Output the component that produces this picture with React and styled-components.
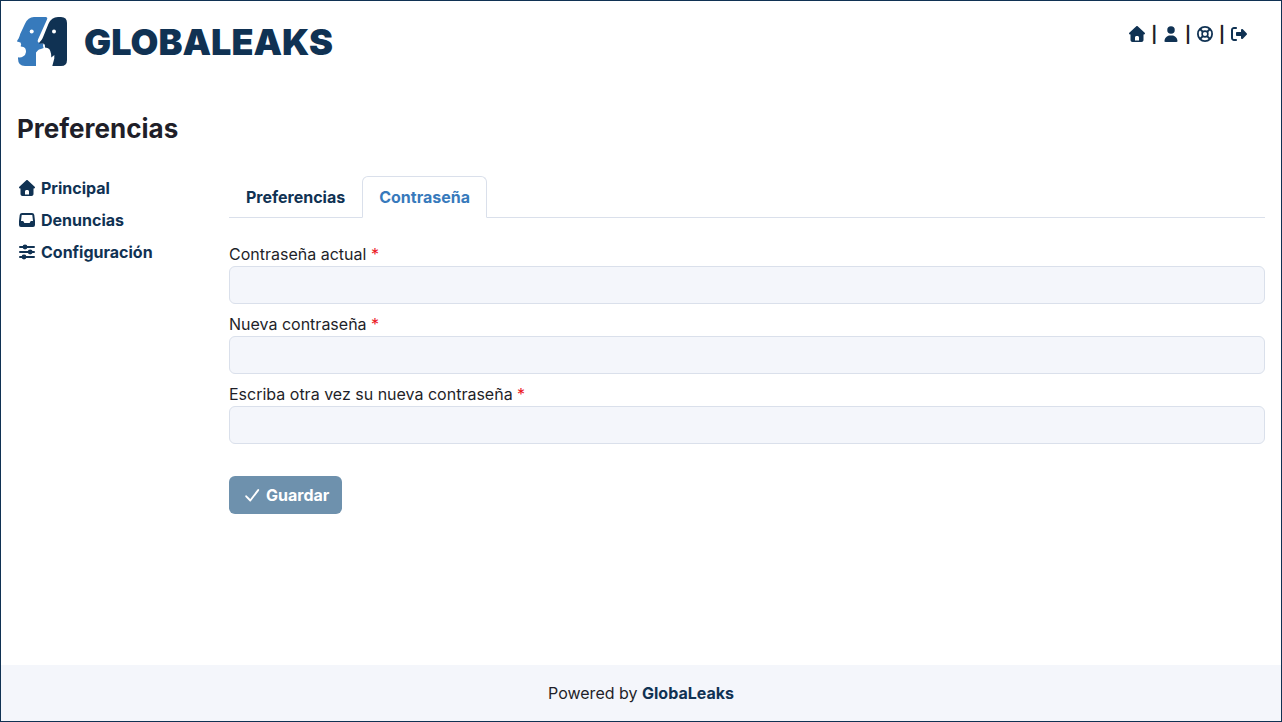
import React, { useState } from "react";
import styled, { createGlobalStyle } from "styled-components";
import { FaRightFromBracket } from "react-icons/fa6";

const GlobalStyle = createGlobalStyle`
  *, *::before, *::after {
    box-sizing: border-box;
  }
  body {
    margin: 0;
    background-color: white;
    color: rgb(31, 31, 41);
    font-family: Inter, "Liberation Sans", sans-serif;
    font-size: 16px;
    line-height: 24px;
  }
  a {
    color: rgb(16, 50, 83);
    font-weight: bold;
    text-decoration: none;
  }
`;

const Page = styled.div`
  min-height: 100vh;
  border: 1px solid rgb(16, 50, 83);
  display: flex;
  flex-direction: column;
`;

const Header = styled.header`
  display: flex;
  justify-content: space-between;
  align-items: flex-start;
  padding: 16px;
`;

const Brand = styled.a`
  display: flex;
  align-items: center;
  gap: 16px;
  height: 50px;
`;

const BrandName = styled.span`
  font-size: 36px;
  font-weight: 900;
  line-height: 50px;
`;

const UserMenu = styled.nav`
  display: flex;
  align-items: center;
  gap: 6px;
  padding: 5px 18px 0 0;
  a {
    display: flex;
  }
`;

const Divider = styled.span`
  font-weight: bold;
`;

const Icon = styled.svg`
  flex: none;
  width: 16px;
  height: 16px;
  fill: currentColor;
`;

const Content = styled.main`
  flex: 1;
  padding: 30px 16px;
`;

const Title = styled.h1`
  margin: 0 0 31px 0;
  font-size: 26px;
  line-height: 32px;
  font-weight: bold;
`;

const Columns = styled.div`
  display: flex;
  margin: 0 -12px;
`;

const Sidebar = styled.nav`
  flex: 0 0 calc(100% / 6);
  padding: 0 12px;
`;

const SideLink = styled.a`
  display: flex;
  align-items: center;
  gap: 6px;
  height: 32px;
  padding-left: 2px;
  margin-top: ${(props) => (props.$first ? "-4px" : "0")};
`;

const Panel = styled.section`
  flex: 1;
  padding: 0 12px;
`;

const Tabs = styled.div`
  display: flex;
  border-bottom: 1px solid rgb(218, 224, 235);
`;

const Tab = styled.button`
  height: 42px;
  margin: 0 0 -1px 0;
  padding: 0 16px;
  border: 1px solid ${(props) => (props.$active ? "rgb(218, 224, 235)" : "transparent")};
  border-bottom-color: ${(props) => (props.$active ? "white" : "transparent")};
  border-radius: 6px 6px 0 0;
  background-color: ${(props) => (props.$active ? "white" : "transparent")};
  color: ${(props) => (props.$active ? "rgb(55, 122, 188)" : "rgb(16, 50, 83)")};
  font: inherit;
  font-weight: bold;
  cursor: pointer;
`;

const Form = styled.form`
  display: flex;
  flex-direction: column;
  align-items: flex-start;
  gap: 8px;
  padding-top: 24px;
`;

const Field = styled.div`
  width: 100%;
`;

const Label = styled.label`
  display: block;
`;

const Required = styled.span`
  color: rgb(235, 20, 30);
`;

const Input = styled.input`
  display: block;
  width: 100%;
  height: 38px;
  padding: 6px 12px;
  border: 1px solid rgb(218, 224, 235);
  border-radius: 6px;
  background-color: rgb(244, 246, 251);
  font: inherit;
`;

const SaveButton = styled.button`
  display: flex;
  align-items: center;
  gap: 5px;
  height: 38px;
  margin-top: 24px;
  padding: 0 13px 0 16px;
  border: 0;
  border-radius: 6px;
  background-color: rgb(110, 145, 173);
  color: white;
  font: inherit;
  font-weight: bold;
`;

const Footer = styled.footer`
  padding: 16px;
  background-color: rgb(244, 246, 251);
  text-align: center;
`;

const Logo = () => (
  <svg width="51" height="50" viewBox="0 0 51 50" aria-hidden="true">
    <path
      fill="rgb(55, 122, 188)"
      d="M17 0H28.5Q31 0 30 2.5L21 22.5Q20 25 22 25.8L26.4 27Q25.4 28.5 26.6 31L24 32Q21.6 32 20.8 33.6L19 35.5V49H8Q1 49 1 41.5V40.2Q4 40.8 6 39.4Q8.8 38 9 35Q9.1 31.2 6.5 30L3.8 29.4Q3.6 28.4 4.2 27.5L3.5 25.6L0 24.4Q0 23.5 1.6 21.5Q2.7 19.3 3.2 17L8 6.8Q11 0 17 0Z"
    />
    <path
      fill="rgb(16, 50, 83)"
      d="M41 0H44Q50 0 50 6V43Q50 49 44 49H35.3L37.3 41.5V38L34.3 40.4Q34.2 36 33.2 33.8Q32.6 31.8 30.5 31L28 30.4Q28.2 27.5 27 26.7L22 26.6Q22.2 25.2 23.7 24Q25.3 22.3 26 20.3L31.5 6.8Q34.5 0 41 0Z"
    />
    <circle cx="14.7" cy="14.5" r="2" fill="white" />
    <circle cx="37" cy="14.5" r="2" fill="white" />
  </svg>
);

const HouseIcon = () => (
  <Icon viewBox="0 0 512 512" aria-hidden="true">
    <path d="M277.8 8.6c-12.3-11.4-31.3-11.4-43.5 0l-224 208c-9.6 9-12.8 22.9-8 35.1S18.8 272 32 272l16 0 0 176c0 35.3 28.7 64 64 64l288 0c35.3 0 64-28.7 64-64l0-176 16 0c13.2 0 25-8.1 29.8-20.3s1.6-26.2-8-35.1l-224-208zM240 320l32 0c26.5 0 48 21.5 48 48l0 96-128 0 0-96c0-26.5 21.5-48 48-48z" />
  </Icon>
);

const UserIcon = () => (
  <Icon viewBox="0 0 448 512" aria-hidden="true">
    <path d="M224 248a120 120 0 1 0 0-240 120 120 0 1 0 0 240zm-29.7 56C95.8 304 16 383.8 16 482.3 16 498.7 29.3 512 45.7 512l356.6 0c16.4 0 29.7-13.3 29.7-29.7 0-98.5-79.8-178.3-178.3-178.3l-59.4 0z" />
  </Icon>
);

const LifeRingIcon = () => (
  <Icon viewBox="0 0 16 16" aria-hidden="true">
    <g fill="none" stroke="currentColor">
      <circle cx="8" cy="8" r="7.1" strokeWidth="1.8" />
      <circle cx="8" cy="8" r="2.9" strokeWidth="1.6" />
      <path
        d="M3 3L5.9 5.9M13 3L10.1 5.9M3 13L5.9 10.1M13 13L10.1 10.1"
        strokeWidth="2"
      />
    </g>
  </Icon>
);

const InboxIcon = () => (
  <Icon viewBox="0 0 16 16" aria-hidden="true">
    <path
      fillRule="evenodd"
      d="M3 1H13Q15 1 15.3 3L16 9V13Q16 15 14 15H2Q0 15 0 13V9L.7 3Q1 1 3 1ZM2.7 3L2 9H4.2L5.4 11H10.6L11.8 9H14L13.3 3Z"
    />
  </Icon>
);

const SlidersIcon = () => (
  <Icon viewBox="0 0 16 16" aria-hidden="true">
    <path
      d="M1 3H15M1 8H15M1 13H15"
      stroke="currentColor"
      strokeWidth="2"
      strokeLinecap="round"
    />
    <circle cx="6" cy="3" r="2.4" />
    <circle cx="11.2" cy="8" r="2.4" />
    <circle cx="5" cy="13" r="2.4" />
  </Icon>
);

const CheckIcon = () => (
  <Icon viewBox="0 0 16 16" aria-hidden="true">
    <path
      d="M1.2 9.3L5.3 13.5L13.2 3.1"
      fill="none"
      stroke="currentColor"
      strokeWidth="1.9"
      strokeLinecap="round"
      strokeLinejoin="round"
    />
  </Icon>
);

const sideLinks = [
  { text: "Principal", icon: <HouseIcon /> },
  { text: "Denuncias", icon: <InboxIcon /> },
  { text: "Configuración", icon: <SlidersIcon /> },
];

const userLinks = [
  { text: "Principal", icon: <HouseIcon /> },
  { text: "Preferencias", icon: <UserIcon /> },
  { text: "Ayuda", icon: <LifeRingIcon /> },
  { text: "Salir", icon: <FaRightFromBracket size={16} /> },
];

const fields = [
  { id: "current", text: "Contraseña actual" },
  { id: "new", text: "Nueva contraseña" },
  { id: "confirm", text: "Escriba otra vez su nueva contraseña" },
];

const App = () => {
  const [active, setActive] = useState("Contraseña");
  return (
    <>
      <GlobalStyle />
      <Page>
        <Header>
          <Brand href="#">
            <Logo />
            <BrandName>GLOBALEAKS</BrandName>
          </Brand>
          <UserMenu>
            {userLinks.map((v, i) => (
              <React.Fragment key={i}>
                {i > 0 && <Divider>|</Divider>}
                <a href="#" aria-label={v.text}>
                  {v.icon}
                </a>
              </React.Fragment>
            ))}
          </UserMenu>
        </Header>
        <Content>
          <Title>Preferencias</Title>
          <Columns>
            <Sidebar>
              {sideLinks.map((v, i) => (
                <SideLink href="#" key={i} $first={i === 0}>
                  {v.icon}
                  {v.text}
                </SideLink>
              ))}
            </Sidebar>
            <Panel>
              <Tabs role="tablist">
                {["Preferencias", "Contraseña"].map((name) => (
                  <Tab
                    type="button"
                    role="tab"
                    key={name}
                    aria-selected={active === name}
                    $active={active === name}
                    onClick={() => setActive(name)}
                  >
                    {name}
                  </Tab>
                ))}
              </Tabs>
              <Form>
                {fields.map((f) => (
                  <Field key={f.id}>
                    <Label htmlFor={f.id}>
                      {f.text} <Required>*</Required>
                    </Label>
                    <Input id={f.id} type="password" required />
                  </Field>
                ))}
                <SaveButton type="submit" disabled>
                  <CheckIcon />
                  Guardar
                </SaveButton>
              </Form>
            </Panel>
          </Columns>
        </Content>
        <Footer>
          Powered by <a href="#">GlobaLeaks</a>
        </Footer>
      </Page>
    </>
  );
};

export default App;
